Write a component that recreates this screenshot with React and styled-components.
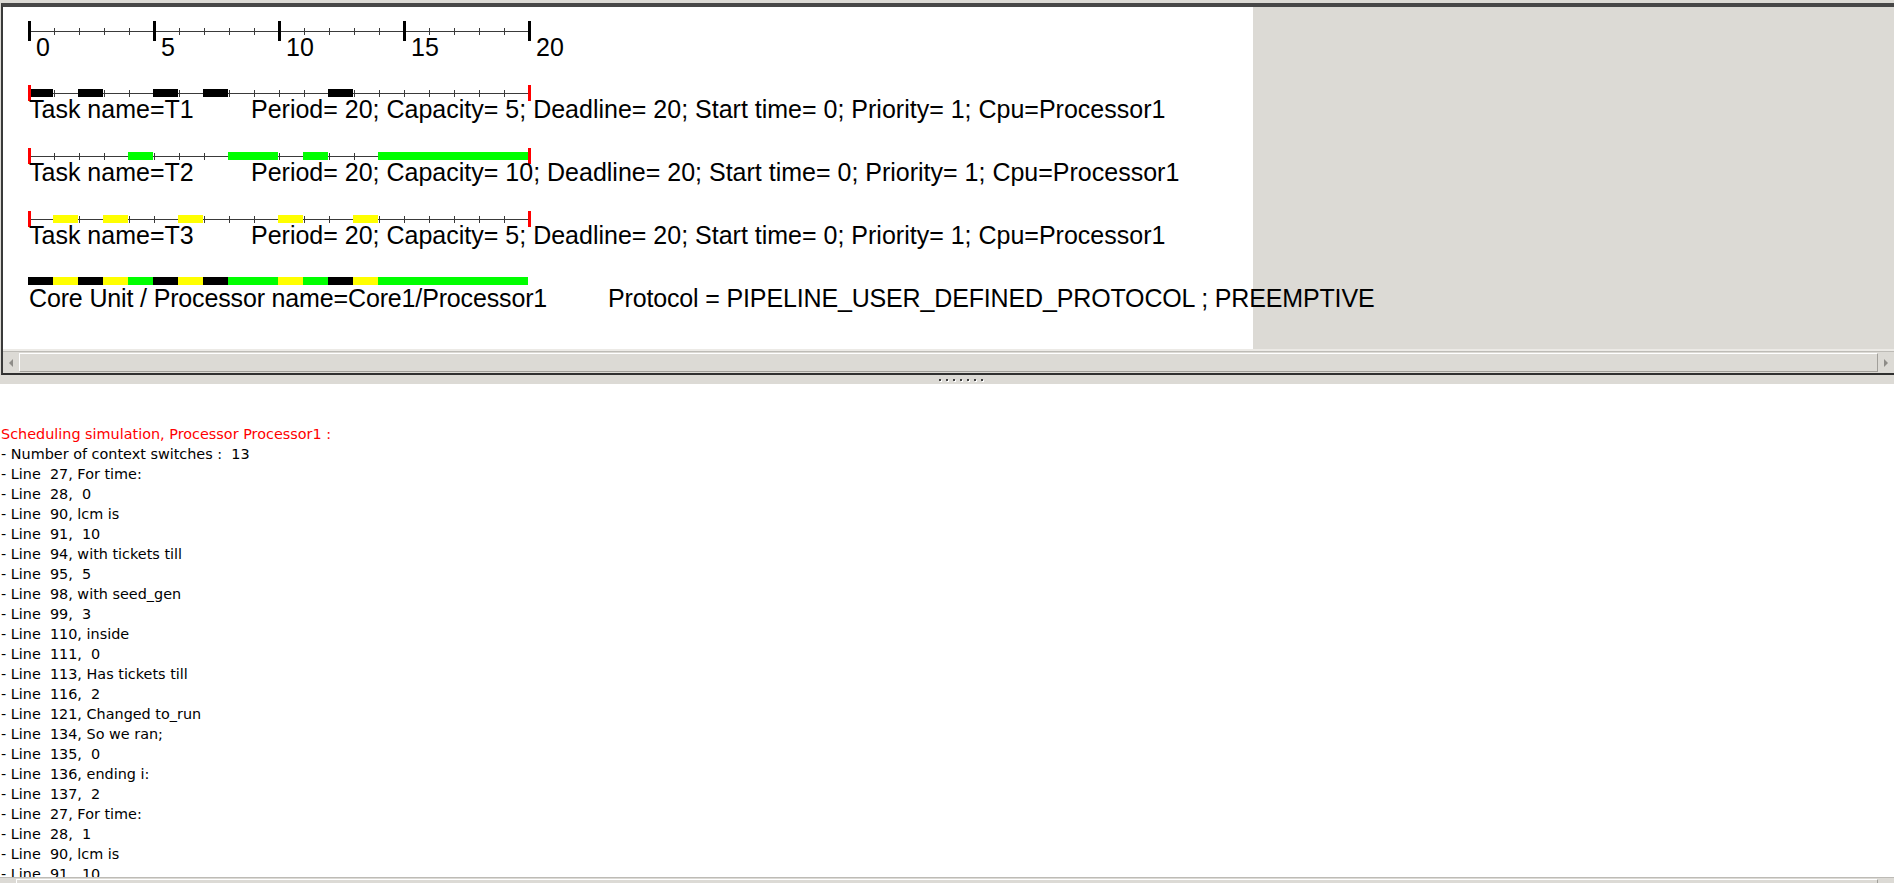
import React from "react";
import styled, { createGlobalStyle } from "styled-components";

const GlobalStyle = createGlobalStyle`
  html, body {
    margin: 0;
    padding: 0;
    background: #dcdad5;
    overflow: hidden;
  }
  body {
    font-family: "Liberation Sans", Arial, sans-serif;
  }
`;

const UNIT = 25;
const LINE = "#3a3a3a";
const RED = "#ff0000";
const BLACK = "#000000";
const GREEN = "#00ff00";
const YELLOW = "#ffff00";

const tasks = [
  { name: "T1", color: BLACK, units: [0, 2, 5, 7, 12], capacity: 5 },
  { name: "T2", color: GREEN, units: [4, 8, 9, 11, 14, 15, 16, 17, 18, 19], capacity: 10 },
  { name: "T3", color: YELLOW, units: [1, 3, 6, 10, 13], capacity: 5 },
];

const coreUnits = Array.from({ length: 20 }, (_, u) => {
  const t = tasks.find((task) => task.units.includes(u));
  return t ? t.color : "transparent";
});

const consoleLines = [
  { text: "Scheduling simulation, Processor Processor1 :", red: true },
  { text: "- Number of context switches :  13" },
  { text: "- Line  27, For time:" },
  { text: "- Line  28,  0" },
  { text: "- Line  90, lcm is" },
  { text: "- Line  91,  10" },
  { text: "- Line  94, with tickets till" },
  { text: "- Line  95,  5" },
  { text: "- Line  98, with seed_gen" },
  { text: "- Line  99,  3" },
  { text: "- Line  110, inside" },
  { text: "- Line  111,  0" },
  { text: "- Line  113, Has tickets till" },
  { text: "- Line  116,  2" },
  { text: "- Line  121, Changed to_run" },
  { text: "- Line  134, So we ran;" },
  { text: "- Line  135,  0" },
  { text: "- Line  136, ending i:" },
  { text: "- Line  137,  2" },
  { text: "- Line  27, For time:" },
  { text: "- Line  28,  1" },
  { text: "- Line  90, lcm is" },
  { text: "- Line  91,  10" },
];

const Window = styled.div`
  height: 883px;
  box-sizing: border-box;
  padding-top: 3px;
  display: flex;
  flex-direction: column;
  overflow: hidden;
  background: #dcdad5;
`;

const TopFrame = styled.div`
  flex: none;
  margin-left: 1px;
  border-top: 4px solid #474747;
  border-left: 2px solid #3a3a3a;
  border-bottom: 2px solid #2f2f2f;
  display: flex;
  flex-direction: column;
`;

const Viewport = styled.div`
  height: 342px;
  display: flex;
  background: #dcdad5;
  overflow: visible;
`;

const Canvas = styled.div`
  flex: none;
  width: 1250px;
  box-sizing: border-box;
  background: #ffffff;
  padding: 14px 0 0 19px;
  display: flex;
  flex-direction: column;
  align-items: flex-start;
  overflow: visible;
  position: relative;
  z-index: 1;
`;

const Strip = styled.svg`
  display: block;
  flex: none;
  overflow: visible;
`;

const AxisText = styled.text`
  font-family: "Liberation Sans", Arial, sans-serif;
  font-size: 25px;
  fill: #000;
`;

const Row = styled.div`
  display: flex;
  flex-direction: column;
  margin-top: ${(p) => p.$top}px;
`;

const Label = styled.div`
  display: flex;
  white-space: nowrap;
  font-family: "Liberation Sans", Arial, sans-serif;
  font-size: 25px;
  line-height: 25px;
  color: #000;
  letter-spacing: ${(p) => (p.$tight ? "-0.15px" : "0")};
  margin-top: ${(p) => p.$top}px;
  margin-left: 7px;
`;

const NameCell = styled.span`
  flex: none;
  width: ${(p) => p.$w}px;
`;

const Band = styled.div`
  height: 2px;
  background: #eceae6;
`;

const HScroll = styled.div`
  flex: none;
  height: 22px;
  box-sizing: border-box;
  display: flex;
  background: #dcdad5;
  border-top: 1px solid #bdbbb6;
`;

const ArrowBtn = styled.div`
  flex: none;
  width: 16px;
  display: flex;
  align-items: center;
  justify-content: center;
  &::before {
    content: "";
    width: 0;
    height: 0;
    border-top: 4px solid transparent;
    border-bottom: 4px solid transparent;
    ${(p) =>
      p.$dir === "left"
        ? "border-right: 4px solid #8e8c88;"
        : "border-left: 4px solid #8e8c88;"}
  }
`;

const Thumb = styled.div`
  flex: 1;
  box-sizing: border-box;
  margin: 1px 0 1px;
  background: #dcdad5;
  border-style: solid;
  border-width: 1px;
  border-color: #ffffff #a19f9a #a19f9a #ffffff;
`;

const Handle = styled.div`
  flex: none;
  height: 9px;
  display: flex;
  align-items: center;
  justify-content: center;
  gap: 5px;
  padding-left: 28px;
  background: #dcdad5;
`;

const Dot = styled.span`
  width: 2px;
  height: 2px;
  background: #3f3f3f;
  box-shadow: 1px 1px 0 #ffffff;
`;

const Console = styled.div`
  flex: none;
  height: 493px;
  box-sizing: border-box;
  background: #ffffff;
  padding: 40px 0 0 1px;
  overflow: hidden;
  font-family: "DejaVu Sans", Verdana, sans-serif;
  font-size: 14.4px;
  line-height: 20px;
  white-space: pre;
`;

const ConsoleLine = styled.div`
  color: ${(p) => (p.$red ? "#ff0000" : "#000000")};
`;

function Axis() {
  const marks = [];
  for (let u = 0; u <= 20; u++) {
    if (u % 5 === 0) {
      marks.push(<rect key={u} x={6 + u * UNIT} y={0} width={3} height={20} fill="#000" />);
    } else {
      marks.push(<rect key={u} x={7 + u * UNIT} y={7} width={1} height={7} fill={LINE} />);
    }
  }
  return (
    <Strip width={520} height={40} viewBox="0 0 520 40">
      <rect x={6} y={10} width={503} height={1} fill={LINE} />
      {marks}
      {[0, 5, 10, 15, 20].map((v) => (
        <AxisText key={v} x={14 + v * UNIT} y={35}>
          {v}
        </AxisText>
      ))}
    </Strip>
  );
}

function TaskTimeline({ units, color }) {
  const ticks = [];
  for (let u = 1; u < 20; u++) {
    ticks.push(<rect key={u} x={7 + u * UNIT} y={6} width={1} height={7} fill={LINE} />);
  }
  return (
    <Strip width={520} height={18} viewBox="0 0 520 18">
      <rect x={6} y={9} width={503} height={1} fill={LINE} />
      {ticks}
      {units.map((u) => (
        <rect key={u} x={6 + u * UNIT} y={5} width={UNIT} height={8} fill={color} />
      ))}
      <rect x={6} y={1} width={3} height={16} fill={RED} />
      <rect x={506} y={1} width={3} height={16} fill={RED} />
    </Strip>
  );
}

function CoreBar() {
  return (
    <Strip width={520} height={8} viewBox="0 0 520 8">
      {coreUnits.map((c, u) => (
        <rect key={u} x={6 + u * UNIT} y={0} width={UNIT} height={8} fill={c} />
      ))}
    </Strip>
  );
}

function ScrollBar() {
  return (
    <HScroll>
      <ArrowBtn $dir="left" />
      <Thumb />
      <ArrowBtn $dir="right" />
    </HScroll>
  );
}

export default function App() {
  return (
    <>
      <GlobalStyle />
      <Window>
        <TopFrame>
          <Viewport>
            <Canvas>
              <Axis />
              {tasks.map((t, i) => (
                <Row key={t.name} $top={i === 0 ? 23 : 25}>
                  <TaskTimeline units={t.units} color={t.color} />
                  <Label $top={-5}>
                    <NameCell $w={222}>Task name={t.name}</NameCell>
                    <span>
                      Period= 20; Capacity= {t.capacity}; Deadline= 20; Start time= 0; Priority= 1; Cpu=Processor1
                    </span>
                  </Label>
                </Row>
              ))}
              <Row $top={29}>
                <CoreBar />
                <Label $top={1} $tight>
                  <NameCell $w={579}>Core Unit / Processor name=Core1/Processor1</NameCell>
                  <span>Protocol = PIPELINE_USER_DEFINED_PROTOCOL ; PREEMPTIVE</span>
                </Label>
              </Row>
            </Canvas>
          </Viewport>
          <Band />
          <ScrollBar />
        </TopFrame>
        <Handle>
          {Array.from({ length: 7 }, (_, i) => (
            <Dot key={i} />
          ))}
        </Handle>
        <Console>
          {consoleLines.map((l, i) => (
            <ConsoleLine key={i} $red={l.red}>
              {l.text}
            </ConsoleLine>
          ))}
        </Console>
        <ScrollBar />
      </Window>
    </>
  );
}
